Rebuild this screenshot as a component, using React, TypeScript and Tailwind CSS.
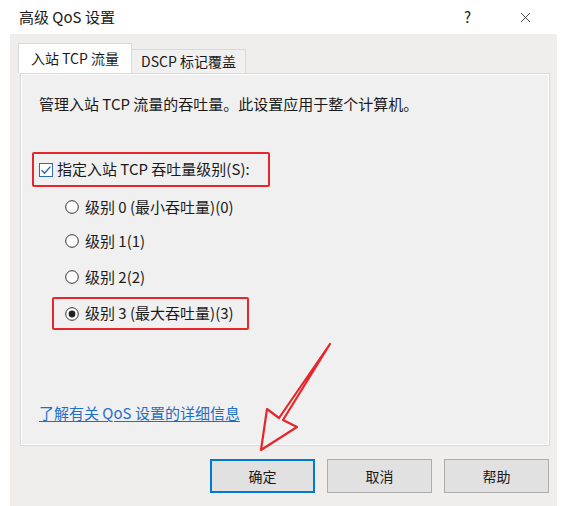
import React from "react";
import { X } from "lucide-react";

const font = { fontFamily: '"Noto Sans CJK SC", "Noto Sans", sans-serif' };

const Radio = ({ checked }: { checked?: boolean }) => (
  <svg width="14" height="14" viewBox="0 0 14 14" className="shrink-0">
    <circle cx="7" cy="7" r="6.3" fill="#fff" stroke="#333" strokeWidth="1" />
    {checked && <circle cx="7" cy="7" r="3.4" fill="#222" />}
  </svg>
);

const Checkbox = () => (
  <svg width="14" height="14" viewBox="0 0 14 14" className="shrink-0">
    <rect x="0.5" y="0.5" width="13" height="13" fill="#fff" stroke="#2f6bb0" />
    <path d="M2.6 7.2 L5.6 10.2 L11.4 3.6" fill="none" stroke="#2b64a7" strokeWidth="1.4" />
  </svg>
);

const RadioRow = ({ label, checked }: { label: string; checked?: boolean }) => (
  <div className="flex h-[20px] items-center gap-[6px]">
    <Radio checked={checked} />
    <span>{label}</span>
  </div>
);

const Btn = ({ label, primary }: { label: string; primary?: boolean }) => (
  <button
    className={
      primary
        ? "h-[34px] w-[105px] border-2 border-[#0078d7] bg-[#e1e1e1] text-[14px] text-[#1a1a1a]"
        : "h-[34px] w-[105px] border border-[#adadad] bg-[#e1e1e1] text-[14px] text-[#1a1a1a]"
    }
  >
    {label}
  </button>
);

export default function App() {
  return (
    <div className="relative flex h-[506px] w-[564px] flex-col bg-white text-[#1a1a1a]" style={font}>
      {/* title bar */}
      <div className="flex h-[34px] items-center pl-[19px] pr-[30px] text-[15px]">
        <span>高级 QoS 设置</span>
        <span className="ml-auto mr-[46px] text-[15px]">?</span>
        <X size={17} strokeWidth={1.2} className="text-[#222]" />
      </div>

      {/* body */}
      <div className="ml-[10px] mr-[7px] flex flex-1 flex-col bg-[#efeeed] pl-[10px] pr-[7px] pt-[10px]">
        {/* tabs */}
        <div className="flex h-[29px] items-end text-[14px]">
          <div className="relative z-10 -ml-[2px] flex h-[30px] w-[114px] items-center justify-center border border-b-0 border-[#d9d9d9] bg-white">
            入站 TCP 流量
          </div>
          <div className="flex h-[24px] w-[114px] items-center justify-center border border-b-0 border-l-0 border-[#d9d9d9] bg-[#f0f0f0]">
            DSCP 标记覆盖
          </div>
        </div>

        {/* panel */}
        <div className="flex h-[373px] flex-col border border-[#d9d9d9] bg-[#f0f0f0] pl-[18px] text-[15px] shadow-[inset_1px_1px_0_#ffffff,inset_-1px_-1px_0_#ffffff]">
          <div className="mt-[20px] flex h-[20px] items-center">
            管理入站 TCP 流量的吞吐量。此设置应用于整个计算机。
          </div>

          <div className="-ml-[7px] mt-[38px] flex h-[35px] w-[238px] items-center gap-[4px] rounded-[2px] border-2 border-[#e5262b] pl-[5px]">
            <Checkbox />
            <span>指定入站 TCP 吞吐量级别(S):</span>
          </div>

          <div className="ml-[26px] mt-[10px]">
            <RadioRow label="级别 0 (最小吞吐量)(0)" />
          </div>
          <div className="ml-[26px] mt-[14px]">
            <RadioRow label="级别 1(1)" />
          </div>
          <div className="ml-[26px] mt-[16px]">
            <RadioRow label="级别 2(2)" />
          </div>
          <div className="ml-[13px] mt-[10px] flex h-[33px] w-[197px] items-center rounded-[2px] border-2 border-[#e5262b] pl-[11px]">
            <RadioRow label="级别 3 (最大吞吐量)(3)" checked />
          </div>

          <div className="mt-[73px] flex h-[20px] items-center">
            <span className="text-[#1f6fc5] underline underline-offset-2">了解有关 QoS 设置的详细信息</span>
          </div>
        </div>

        {/* buttons */}
        <div className="mt-[13px] flex justify-end gap-[12px] pr-[1px]">
          <Btn label="确定" primary />
          <Btn label="取消" />
          <Btn label="帮助" />
        </div>
      </div>

      {/* annotation arrow */}
      <svg className="pointer-events-none absolute left-0 top-0" width="564" height="506" viewBox="0 0 564 506">
        <path
          d="M330 344 L283 420 L297 427 L261 450 L267 409 L279 418 Z"
          fill="none"
          stroke="#e5262b"
          strokeWidth="2.2"
          strokeLinejoin="round"
        />
      </svg>
    </div>
  );
}
